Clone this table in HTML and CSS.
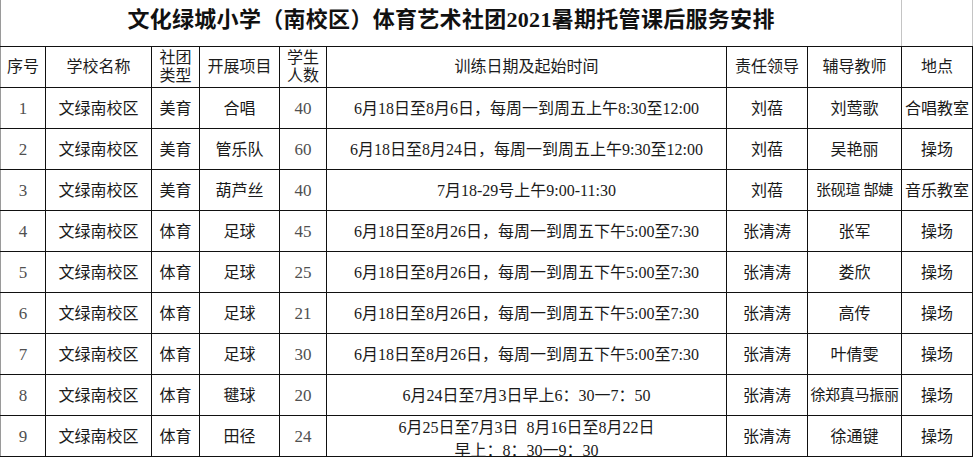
FILE: index.html
```html
<!DOCTYPE html>
<html lang="zh-CN">
<head>
<meta charset="utf-8">
<title>体育艺术社团2021暑期托管课后服务安排</title>
<link rel="stylesheet" href="styles.css">
</head>
<body>
<table class="sheet">
  <colgroup>
    <col class="c-no"><col class="c-school"><col class="c-type"><col class="c-item"><col class="c-num"><col class="c-time"><col class="c-lead"><col class="c-teacher"><col class="c-place">
  </colgroup>
  <tr class="title-row">
    <td class="title" colspan="8">文化绿城小学（南校区）体育艺术社团2021暑期托管课后服务安排</td>
    <td class="title-side"></td>
  </tr>
  <tr class="head">
    <th>序号</th><th>学校名称</th><th>社团<br>类型</th><th>开展项目</th><th>学生<br>人数</th><th>训练日期及起始时间</th><th>责任领导</th><th>辅导教师</th><th>地点</th>
  </tr>
  <tr>
    <td class="num">1</td><td>文绿南校区</td><td>美育</td><td>合唱</td><td class="num">40</td><td>6月18日至8月6日，每周一到周五上午8:30至12:00</td><td>刘蓓</td><td>刘莺歌</td><td>合唱教室</td>
  </tr>
  <tr>
    <td class="num">2</td><td>文绿南校区</td><td>美育</td><td>管乐队</td><td class="num">60</td><td>6月18日至8月24日，每周一到周五上午9:30至12:00</td><td>刘蓓</td><td>吴艳丽</td><td>操场</td>
  </tr>
  <tr>
    <td class="num">3</td><td>文绿南校区</td><td>美育</td><td>葫芦丝</td><td class="num">40</td><td>7月18-29号上午9:00-11:30</td><td>刘蓓</td><td class="tight">张砚瑄&nbsp;郜婕</td><td>音乐教室</td>
  </tr>
  <tr>
    <td class="num">4</td><td>文绿南校区</td><td>体育</td><td>足球</td><td class="num">45</td><td>6月18日至8月26日，每周一到周五下午5:00至7:30</td><td>张清涛</td><td>张军</td><td>操场</td>
  </tr>
  <tr>
    <td class="num">5</td><td>文绿南校区</td><td>体育</td><td>足球</td><td class="num">25</td><td>6月18日至8月26日，每周一到周五下午5:00至7:30</td><td>张清涛</td><td>娄欣</td><td>操场</td>
  </tr>
  <tr>
    <td class="num">6</td><td>文绿南校区</td><td>体育</td><td>足球</td><td class="num">21</td><td>6月18日至8月26日，每周一到周五下午5:00至7:30</td><td>张清涛</td><td>高传</td><td>操场</td>
  </tr>
  <tr>
    <td class="num">7</td><td>文绿南校区</td><td>体育</td><td>足球</td><td class="num">30</td><td>6月18日至8月26日，每周一到周五下午5:00至7:30</td><td>张清涛</td><td>叶倩雯</td><td>操场</td>
  </tr>
  <tr>
    <td class="num">8</td><td>文绿南校区</td><td>体育</td><td>毽球</td><td class="num">20</td><td>6月24日至7月3日早上6：30一7：50</td><td>张清涛</td><td class="tight">徐郑真马振丽</td><td>操场</td>
  </tr>
  <tr>
    <td class="num">9</td><td>文绿南校区</td><td>体育</td><td>田径</td><td class="num">24</td><td class="multi"><span class="two-line">6月25日至7月3日&nbsp;&nbsp;8月16日至8月22日<br>早上：8：30一9：30</span></td><td>张清涛</td><td>徐通键</td><td>操场</td>
  </tr>
</table>
</body>
</html>
```
FILE: styles.css
```css
html, body {
  margin: 0;
  padding: 0;
  background: #fff;
}

body {
  font-family: "Liberation Serif", "Noto Sans CJK SC", serif;
  color: #1a1a1a;
  overflow: hidden;
}

.sheet {
  border-collapse: collapse;
  table-layout: fixed;
  width: 972px;
  margin-left: 0;
}

.c-no { width: 45px; }
.c-school { width: 106px; }
.c-type { width: 48px; }
.c-item { width: 80px; }
.c-num { width: 47px; }
.c-time { width: 400px; }
.c-lead { width: 81px; }
.c-teacher { width: 94px; }
.c-place { width: 71px; }

.sheet td, .sheet th {
  border: 1px solid #111;
  padding: 0;
  text-align: center;
  vertical-align: middle;
  font-size: 16px;
  line-height: 19px;
  font-weight: normal;
  white-space: nowrap;
  height: 40px;
}

.sheet tr > :first-child {
  border-left: 1px solid #9a9a9a;
}

.title-row td {
  height: 40px;
  border-top: none;
  border-left: 1px solid #b5b5b5;
  border-right: 1px solid #c4c4c4;
  border-bottom: 1px solid #111;
}

.title {
  font-family: "Liberation Serif", "Noto Sans CJK SC", serif;
  font-weight: bold !important;
  font-size: 22px !important;
  line-height: 26px !important;
  color: #111;
  padding-bottom: 6px !important;
  letter-spacing: 0.3px;
}

.head th {
  color: #1c1c1c;
  line-height: 18px;
  height: 40px;
}

.num {
  color: #505050;
  font-size: 17px !important;
}

.tight {
  font-size: 15px !important;
  letter-spacing: -0.3px;
}

.sheet td.multi {
  vertical-align: top;
}

.two-line {
  display: block;
  height: 40px;
  line-height: 23px;
  overflow: visible;
}
```
